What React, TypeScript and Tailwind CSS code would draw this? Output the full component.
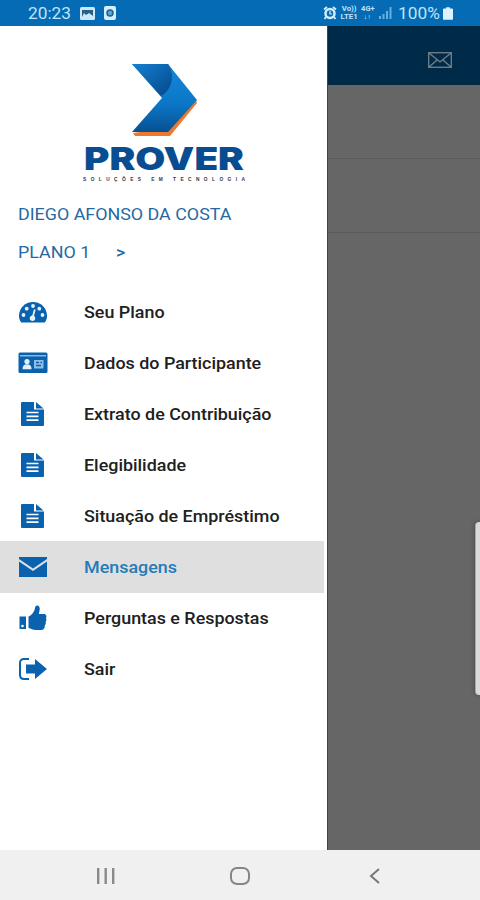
import { type ReactNode } from "react";
import { clsx } from "clsx";

function GaugeIcon() {
  return (
    <svg width="30" height="22" viewBox="0 0 30 22">
      <path d="M3.200 21.500C1.700 19.500 1 17.300 1 15 1 7 7.300 1 15 1s14 6 14 14c0 2.300-.7 4.500-2.200 6.500z" fill="#0a62ae" />
      <g fill="#e4f1fa">
        <circle cx="5.500" cy="14" r="1.900" />
        <circle cx="8.700" cy="7.700" r="1.900" />
        <circle cx="15" cy="5" r="1.900" />
        <circle cx="21.300" cy="7.700" r="1.900" />
        <circle cx="24.500" cy="14" r="1.900" />
        <circle cx="14.500" cy="17.200" r="2.700" />
      </g>
      <path d="M14.500 17L16.800 8.500" stroke="#e4f1fa" strokeWidth="1.800" />
    </svg>
  );
}

function IdCardIcon() {
  return (
    <svg width="30" height="22" viewBox="0 0 30 22">
      <rect x="0.5" y="0.5" width="29" height="20.5" rx="1.5" fill="#0a62ae" />
      <path d="M2 3.800h26" stroke="#b9d7ee" strokeWidth="1.100" />
      <circle cx="9" cy="9.500" r="2.600" fill="#e4f1fa" />
      <path d="M4.500 17.200c0-3.500 1.500-5 4.500-5s4.500 1.500 4.500 5z" fill="#e4f1fa" />
      <path d="M16 8h9.500v8.500H16z" fill="#8fbfe3" />
      <path d="M18 10.500h3M18 13.500h5M22.500 10.500h1.500" stroke="#0a62ae" strokeWidth="1.500" />
    </svg>
  );
}

function DocumentIcon() {
  return (
    <svg width="30" height="26" viewBox="0 0 30 26">
      <path d="M4 1h12v7.500h10V24a1 1 0 0 1-1 1H4a1 1 0 0 1-1-1V2a1 1 0 0 1 1-1z" fill="#0a62ae" />
      <path d="M18 1l7.500 6.500H18z" fill="#0a62ae" />
      <path d="M8.500 11.500h12M8.500 15.300h12M8.500 19.100h12" stroke="#fff" strokeWidth="1.700" />
    </svg>
  );
}

function EnvelopeIcon() {
  return (
    <svg width="30" height="22" viewBox="0 0 30 22">
      <path d="M1 1h28v2L15 12.500 1 3z" fill="#0a62ae" />
      <path d="M1 5.500l14 9.500 14-9.500V21H1z" fill="#0a62ae" />
    </svg>
  );
}

function ThumbIcon() {
  return (
    <svg width="30" height="28" viewBox="0 0 30 28" fill="#0a62ae">
      <path d="M1.500 12.500h6.500v12.500H1.500z" />
      <circle cx="4.500" cy="22" r="1.300" fill="#fff" />
      <path d="M10.500 12.500c3-1 4.500-3.500 6-6.500.6-1.500.5-4.500 2.400-4.500 2.200 0 3.100 1.700 2.800 4l-.8 4.500H26c2.300 0 3.100 2.600 1.900 4 .8 1.300.6 3-.3 4 .4 1.500 0 2.800-.8 3.500.1 2.800-1.200 4.500-3.700 4.500H18c-3.500 0-4.500-1.500-7.500-2z" />
    </svg>
  );
}

function LogoutIcon() {
  return (
    <svg width="30" height="24" viewBox="0 0 30 24">
      <path d="M11 2H6C3.200 2 2 3.500 2 6v12c0 2.500 1.200 4 4 4h5" fill="none" stroke="#0a62ae" strokeWidth="2" />
      <path d="M8 7.500h9V2l12 10-12 10v-5.500H8z" fill="#0a62ae" />
    </svg>
  );
}

type MenuEntry = {
  label: string;
  icon: ReactNode;
  active?: boolean;
};

const menu: MenuEntry[] = [
  { label: "Seu Plano", icon: <GaugeIcon /> },
  { label: "Dados do Participante", icon: <IdCardIcon /> },
  { label: "Extrato de Contribuição", icon: <DocumentIcon /> },
  { label: "Elegibilidade", icon: <DocumentIcon /> },
  { label: "Situação de Empréstimo", icon: <DocumentIcon /> },
  { label: "Mensagens", icon: <EnvelopeIcon />, active: true },
  { label: "Perguntas e Respostas", icon: <ThumbIcon /> },
  { label: "Sair", icon: <LogoutIcon /> },
];

function StatusBar() {
  return (
    <header className="flex h-[26px] shrink-0 items-center justify-between bg-[#056bb5] pr-[27px] pl-7 text-[#bfe3fb]">
      <div className="flex items-center">
        <span className="w-[43px] origin-left scale-x-[1.08] pt-0.5 text-base">20:23</span>
        <svg className="ml-[9px]" width="15" height="13" viewBox="0 0 15 13">
          <rect width="15" height="13" rx="1.500" fill="#c9e8fb" />
          <path d="M2 10V3h11v6L9 6 6 8 4 6z" fill="#285f84" />
        </svg>
        <svg className="ml-[9px]" width="12" height="14" viewBox="0 0 12 14">
          <rect width="12" height="14" rx="2" fill="#d5effc" />
          <circle cx="6" cy="7" r="3" fill="#5ba3d0" stroke="#1f618f" strokeWidth="1.500" />
        </svg>
      </div>
      <div className="flex items-center">
        <svg width="14" height="14" viewBox="0 0 14 14" fill="none" stroke="#d3effd">
          <circle cx="7" cy="7.500" r="4.500" strokeWidth="2.500" />
          <path d="M1 3.500L4 1M13 3.500L10 1M3 11l-1.500 2M11 11l1.500 2" strokeWidth="1.800" />
          <path d="M7 5v3h2" strokeWidth="1.200" />
        </svg>
        <div className="ml-[3px] flex w-[18px] flex-col items-center text-[6.500px] leading-[8px] font-bold">
          <span className="scale-x-[1.2]">Vo))</span>
          <span className="scale-x-[1.2]">LTE1</span>
        </div>
        <div className="ml-0.5 flex w-[15px] flex-col items-center text-[6.500px] leading-[8px] font-bold">
          <span className="scale-x-[1.15]">4G+</span>
          <span className="scale-x-[1.15]">↓↑</span>
        </div>
        <svg className="ml-1" width="13" height="12" viewBox="0 0 13 12" fill="#65afe0">
          <path d="M0 9h2v3H0zM3.500 7h2v5h-2zM7 4h2v8H7zM10.500 0h2v12h-2z" />
        </svg>
        <span className="ml-[6px] w-[45px] origin-left scale-x-[1.08] pt-0.5 text-base">100%</span>
        <svg width="10" height="13" viewBox="0 0 11 14" fill="#dcf3ff">
          <path d="M3.500 0h4v1.500H10a1 1 0 0 1 1 1V13a1 1 0 0 1-1 1H1a1 1 0 0 1-1-1V2.500a1 1 0 0 1 1-1h2.500z" />
        </svg>
      </div>
    </header>
  );
}

function Logo() {
  return (
    <svg className="ml-[78px] block" width="172" height="124" viewBox="78 60 172 124">
      <defs>
        <linearGradient id="body" x1="0" y1="0" x2="0" y2="1">
          <stop offset="0" stopColor="#1687d8" />
          <stop offset="0.600" stopColor="#0b76c6" />
          <stop offset="1" stopColor="#084f90" />
        </linearGradient>
        <linearGradient id="fold" x1="0" y1="0" x2="1" y2="1">
          <stop offset="0" stopColor="#1480d0" />
          <stop offset="1" stopColor="#06478a" />
        </linearGradient>
      </defs>
      <path d="M135 136l-2-3 36-5 27-28 1 3-27 33z" fill="#ee782b" />
      <path d="M132 64h36l29 36-29 32h-36l30-34z" fill="url(#body)" />
      <path d="M132 64h36c7 10 5 25-7 32z" fill="url(#fold)" />
      <text x="84" y="169.500" textLength="160" lengthAdjust="spacingAndGlyphs" fontFamily="Inter, sans-serif" fontSize="31" fontWeight="900" fill="#084d91">
        PROVER
      </text>
      <text x="83" y="181" textLength="162" fontFamily="Liberation Sans, sans-serif" fontSize="4.800" fontWeight="700" fill="#30364a">
        SOLUÇÕES EM TECNOLOGIA
      </text>
    </svg>
  );
}

function Drawer() {
  return (
    <aside className="flex w-[327px] shrink-0 flex-col bg-white pt-[34px]">
      <Logo />
      <div className="mt-[19px] flex h-6 items-center pl-[18px] text-[#2469a3]">
        <span className="origin-left scale-x-[1.117] text-base whitespace-nowrap">DIEGO AFONSO DA COSTA</span>
      </div>
      <div className="mt-[14px] flex h-6 items-center pl-[18px] text-[#2469a3]">
        <span className="w-[98px] origin-left scale-x-[1.117] text-base">PLANO 1</span>
        <span className="origin-left scale-x-[1.117] text-base font-medium">&gt;</span>
      </div>
      <nav className="mt-[21px]">
        {menu.map((item) => (
          <a
            key={item.label}
            className={clsx(
              "mr-[3px] flex h-[51.100px] items-center pl-[18px] font-medium",
              item.active ? "bg-[#dfdfdf] text-[#247bb8]" : "text-[#202020]",
            )}
          >
            <span className="flex w-[66px] shrink-0 items-center">{item.icon}</span>
            <span className="origin-left scale-x-[1.118] pt-0.5 text-base whitespace-nowrap">{item.label}</span>
          </a>
        ))}
      </nav>
    </aside>
  );
}

function Backdrop() {
  return (
    <main className="flex flex-1 flex-col border-l border-[#444] bg-[#666]">
      <div className="flex h-[59px] shrink-0 items-center justify-end bg-[#002b48] pt-2 pr-7">
        <svg width="24" height="16" viewBox="0 0 24 16" fill="none" stroke="#73808a" strokeWidth="1.300">
          <rect x="0.700" y="0.700" width="22.600" height="14.600" />
          <path d="M1 1l11 9L23 1M1 15l8-7M23 15l-8-7" />
        </svg>
      </div>
      <div className="h-[74px] border-b border-[#5b5b5b]" />
      <div className="h-[74px] border-b border-[#5b5b5b]" />
      <div className="mt-[289px] h-[173px] w-[5px] self-end rounded-l-[4px] border-l border-[#aaa] bg-[#dadada] shadow-[0_0_4px_#444]" />
    </main>
  );
}

function NavigationBar() {
  return (
    <footer className="flex h-[50px] shrink-0 items-center bg-[#f0f0f0] pt-0.5 pl-24">
      <svg width="20" height="16" viewBox="0 0 20 16" stroke="#8a8a8a" strokeWidth="2.400">
        <path d="M2.200 0v16M9.700 0v16M17.200 0v16" />
      </svg>
      <svg className="ml-[114px]" width="20" height="18" viewBox="0 0 20 18" fill="none" stroke="#858585" strokeWidth="2">
        <rect x="1" y="1" width="18" height="16" rx="6" />
      </svg>
      <svg className="ml-[119px]" width="11" height="16" viewBox="0 0 11 16" fill="none" stroke="#777" strokeWidth="2">
        <path d="M10 1L2 8l8 7" />
      </svg>
    </footer>
  );
}

export default function App() {
  return (
    <div className="flex h-[900px] w-[480px] flex-col overflow-hidden bg-white font-['Roboto',sans-serif]">
      <StatusBar />
      <div className="flex min-h-0 flex-1">
        <Drawer />
        <Backdrop />
      </div>
      <NavigationBar />
    </div>
  );
}
